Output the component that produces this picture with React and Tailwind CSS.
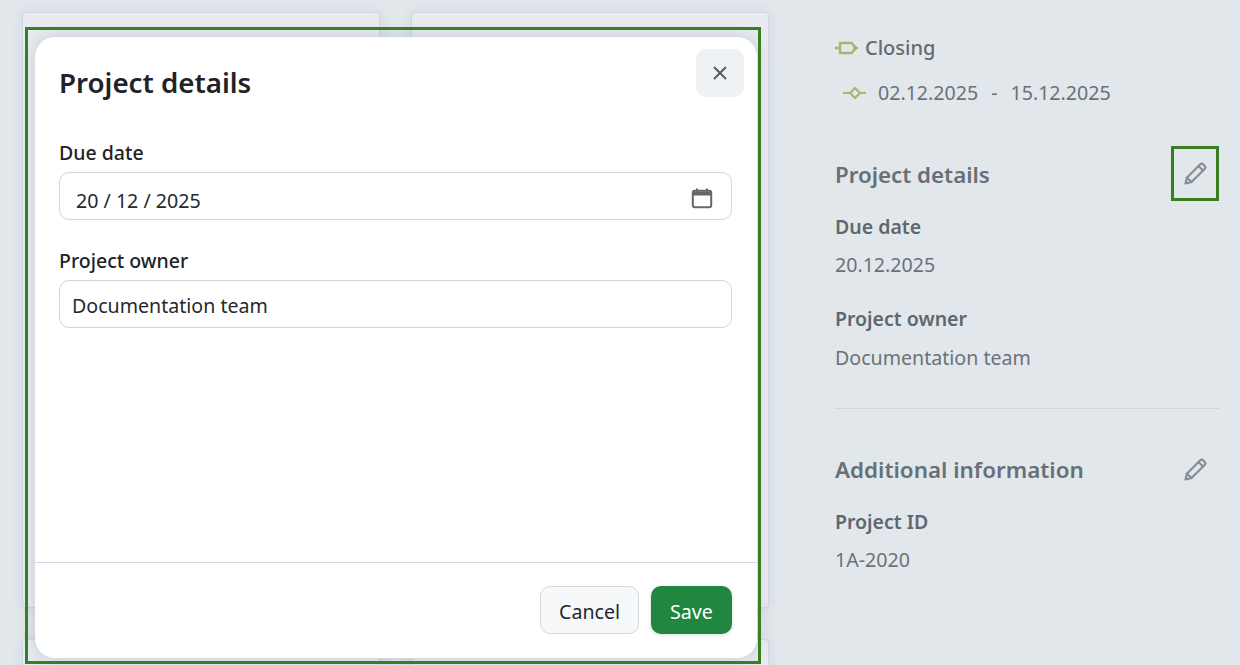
import React from 'react';

const Pencil = () => (
  <svg width="24" height="24" viewBox="0 0 24 24" fill="none" stroke="#868e96" strokeWidth="2.200" strokeLinejoin="round" strokeLinecap="round">
    <path d="M1.500 22.500l1.500-6L16 3.400a2.300 2.300 0 0 1 3.200 0l1.400 1.400a2.300 2.300 0 0 1 0 3.200L7.500 21z" />
    <path d="M14.500 5l4.500 4.500" />
    <path d="M3 16.500l4.500 4.500" />
  </svg>
);

const CalendarIcon = () => (
  <svg width="22" height="22" viewBox="0 0 22 22" fill="none">
    <rect x="1.800" y="3.800" width="18.400" height="16.400" rx="2" stroke="#63676c" strokeWidth="2" />
    <path d="M2 4.500h18V8.500H2z" fill="#63676c" />
    <path d="M6 1.500v3M16 1.500v3" stroke="#63676c" strokeWidth="2" />
  </svg>
);

const PhaseIcon = () => (
  <svg width="24" height="16" viewBox="0 0 24 16" fill="none" stroke="#a6b86a" strokeWidth="2.400">
    <path d="M0 8h5M18 8h5" />
    <path d="M5 3h11.500l4.500 5-4.500 5H5z" />
  </svg>
);

const MilestoneIcon = () => (
  <svg width="24" height="14" viewBox="0 0 24 14" fill="none" stroke="#a6b86a" strokeWidth="2.200">
    <path d="M0 7h7M17 7h6" />
    <path d="M12 2l5 5-5 5-5-5z" />
  </svg>
);

const Field = ({ label, value, valueClass }) => (
  <div className="flex flex-col">
    <span className="text-[19.5px] leading-[26px] font-semibold text-[#5f676e]">{label}</span>
    <span className={`${valueClass} text-[19.6px] leading-[26px] text-[#6a7278]`}>{value}</span>
  </div>
);

const Card = () => (
  <div className="h-[596px] bg-[#e8ecf0] border border-[#cfd7e0] rounded-[4px] shadow-[0_0_12px_rgba(120,135,150,0.15)]" />
);

export default function App() {
  return (
    <div className="relative w-[1240px] h-[665px] overflow-hidden flex bg-[#e2e7ec] font-['Noto_Sans',sans-serif]">
      {/* Cards behind the dialog */}
      <div className="w-[790px] shrink-0 pl-[22px] pt-[12px] grid grid-cols-[358px_358px] gap-x-[31px] gap-y-[31px] content-start">
        <Card />
        <Card />
        <Card />
        <Card />
      </div>

      {/* Side panel */}
      <div className="w-[385px] ml-[45px] pt-[35px] flex flex-col">
        <div className="flex items-center gap-[6px] h-[26px]">
          <PhaseIcon />
          <span className="text-[20px] leading-[26px] font-medium text-[#646c73]">Closing</span>
        </div>
        <div className="flex items-center mt-[18px] h-[26px] pl-[8px] pt-[1px] text-[19.6px] leading-[26px] text-[#6a7278]">
          <MilestoneIcon />
          <span className="ml-[11px]">02.12.2025</span>
          <span className="ml-[13px]">-</span>
          <span className="ml-[13px]">15.12.2025</span>
        </div>

        <div className="mt-[46px] flex items-center justify-between h-[48px]">
          <span className="text-[22.300px] leading-[30px] font-semibold text-[#667076]">Project details</span>
          <span className="-mt-[4px] w-[48px] h-[48px] flex items-center justify-center"><Pencil /></span>
        </div>
        <div className="mt-[15px]">
          <Field label="Due date" value="20.12.2025" valueClass="mt-[12px]" />
        </div>
        <div className="mt-[28px]">
          <Field label="Project owner" value="Documentation team" valueClass="mt-[13px]" />
        </div>
        <div className="mt-[37px] border-t border-[#cfd6dd]" />

        <div className="mt-[37px] flex items-center justify-between h-[48px]">
          <span className="text-[22.400px] leading-[30px] font-semibold text-[#667076]">Additional information</span>
          <span className="-mt-[2px] w-[48px] h-[48px] flex items-center justify-center"><Pencil /></span>
        </div>
        <div className="mt-[15px]">
          <Field label="Project ID" value="1A-2020" valueClass="mt-[12px]" />
        </div>
      </div>

      {/* Dialog */}
      <div className="absolute left-[35px] top-[37px] w-[722px] h-[621px] bg-white rounded-[20px] shadow-[0_0_16px_rgba(90,105,120,0.25)] flex flex-col">
        <div className="flex justify-between pl-[24px] pr-[13px] pt-[12px]">
          <h2 className="mt-[14px] text-[27.700px] leading-[38px] font-semibold text-[#1f2328]">Project details</h2>
          <button className="w-[48px] h-[48px] rounded-[10px] bg-[#eff2f5] flex items-center justify-center">
            <svg width="16" height="16" viewBox="0 0 16 16" fill="none" stroke="#565d67" strokeWidth="2">
              <path d="M2 2l12 12M14 2L2 14" />
            </svg>
          </button>
        </div>

        <div className="flex-1 pl-[24px] pr-[25px] pt-[39px]">
          <div className="text-[19.5px] leading-[26px] font-medium text-[#1f2328]">Due date</div>
          <div className="mt-[6px] h-[48px] border border-[#cfd6df] rounded-[10px] pl-[16px] pr-[18px] flex items-center justify-between">
            <span className="pt-[10px] text-[19.6px] text-[#26292e]">20 / 12 / 2025</span>
            <span className="pt-[4px]"><CalendarIcon /></span>
          </div>
          <div className="mt-[28px] text-[19.5px] leading-[26px] font-medium text-[#1f2328]">Project owner</div>
          <div className="mt-[6px] h-[48px] border border-[#cfd6df] rounded-[10px] pl-[12px] flex items-center">
            <span className="pt-[4px] text-[19.6px] text-[#26292e]">Documentation team</span>
          </div>
        </div>

        <div className="h-[96px] border-t border-[#cfd8df] flex items-start justify-end gap-[12px] pt-[23px] pr-[25px]">
          <button className="w-[99px] h-[48px] pt-[3px] rounded-[10px] bg-[#f6f8fa] border border-[#d3d9e1] text-[19.6px] text-[#24282e]">Cancel</button>
          <button className="w-[81px] h-[48px] pt-[3px] rounded-[10px] bg-[#218640] shadow-[0_1px_4px_rgba(0,0,0,0.15)] text-[19.6px] text-white">Save</button>
        </div>
      </div>

      {/* Annotation frames */}
      <div className="absolute left-[25px] top-[27px] w-[736px] h-[637px] border-[3px] border-[#3a7d22] pointer-events-none" />
      <div className="absolute left-[1171px] top-[146px] w-[48px] h-[55px] border-[3px] border-[#3a7d22] pointer-events-none" />
    </div>
  );
}
